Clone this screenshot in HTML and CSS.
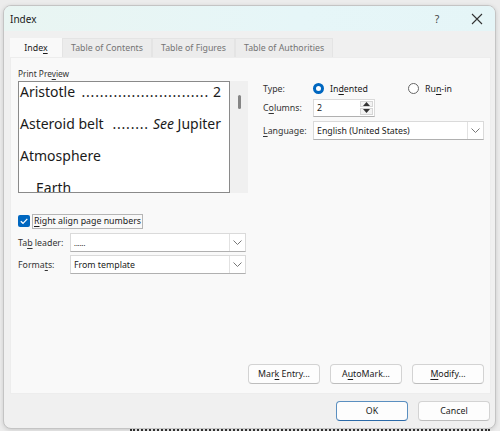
FILE: index.html
```html
<!DOCTYPE html>
<html lang="en">

<head>
    <meta charset="UTF-8" />
    <title>Index</title>
    <link rel="stylesheet" href="styles.css">
</head>

<body>
    <div class="dialog">
        <div class="titlebar">
            <span class="title">Index</span>
            <span class="help">?</span>
            <span class="close">
                <svg width="12" height="12" viewBox="0 0 12 12"><path d="M1 1 L11 11 M11 1 L1 11" stroke="#333" stroke-width="1.1" fill="none" /></svg>
            </span>
        </div>

        <div class="content">
            <div class="tabs">
                <div class="tab active">Inde<u>x</u></div>
                <div class="tab">Table of Contents</div>
                <div class="tab">Table of Figures</div>
                <div class="tab">Table of Authorities</div>
            </div>

            <div class="panel">
                <div class="top">
                    <div class="left-col">
                        <div class="small-label">Print Pre<u>v</u>iew</div>
                        <div class="preview-wrap">
                            <div class="preview">
                                <div class="entry"><span>Aristotle</span><span class="leader">............................</span><span>2</span></div>
                                <div class="entry"><span>Asteroid belt</span><span class="leader">........</span><span><i>See</i> Jupiter</span></div>
                                <div class="entry"><span>Atmosphere</span></div>
                                <div class="entry sub"><span>Earth</span></div>
                            </div>
                            <div class="scroll"><div class="thumb"></div></div>
                        </div>

                        <div class="check-row">
                            <span class="checkbox">
                                <svg width="10" height="10" viewBox="0 0 10 10"><path d="M1.8 5.2 L4 7.3 L8.3 2.8" stroke="#fff" stroke-width="1.2" fill="none" /></svg>
                            </span>
                            <span class="check-label"><u>R</u>ight align page numbers</span>
                        </div>

                        <div class="field-row">
                            <span class="field-label">Ta<u>b</u> leader:</span>
                            <div class="select wide">
                                <span class="dots">......</span>
                                <span class="arrow"><svg width="9" height="5" viewBox="0 0 9 5"><path d="M0.5 0.5 L4.5 4.5 L8.5 0.5" stroke="#777" fill="none" /></svg></span>
                            </div>
                        </div>
                        <div class="field-row">
                            <span class="field-label">Forma<u>t</u>s:</span>
                            <div class="select wide">
                                <span>From template</span>
                                <span class="arrow"><svg width="9" height="5" viewBox="0 0 9 5"><path d="M0.5 0.5 L4.5 4.5 L8.5 0.5" stroke="#777" fill="none" /></svg></span>
                            </div>
                        </div>
                    </div>

                    <div class="right-col">
                        <div class="opt-row">
                            <span class="opt-label">Type:</span>
                            <span class="radio checked"></span>
                            <span class="radio-text">In<u>d</u>ented</span>
                            <span class="radio"></span>
                            <span class="radio-text">Ru<u>n</u>-in</span>
                        </div>
                        <div class="opt-row">
                            <span class="opt-label">C<u>o</u>lumns:</span>
                            <div class="spin">
                                <span>2</span>
                                <div class="spin-btns">
                                    <span class="spin-btn"><svg width="7" height="4" viewBox="0 0 7 4"><path d="M0 4 L3.5 0 L7 4 Z" fill="#333" /></svg></span>
                                    <span class="spin-btn"><svg width="7" height="4" viewBox="0 0 7 4"><path d="M0 0 L3.5 4 L7 0 Z" fill="#333" /></svg></span>
                                </div>
                            </div>
                        </div>
                        <div class="opt-row">
                            <span class="opt-label"><u>L</u>anguage:</span>
                            <div class="select lang">
                                <span>English (United States)</span>
                                <span class="arrow"><svg width="9" height="5" viewBox="0 0 9 5"><path d="M0.5 0.5 L4.5 4.5 L8.5 0.5" stroke="#777" fill="none" /></svg></span>
                            </div>
                        </div>
                    </div>
                </div>

                <div class="panel-buttons">
                    <button class="btn">Mar<u>k</u> Entry...</button>
                    <button class="btn">A<u>u</u>toMark...</button>
                    <button class="btn"><u>M</u>odify...</button>
                </div>
            </div>

            <div class="footer">
                <button class="btn default">OK</button>
                <button class="btn">Cancel</button>
            </div>
        </div>
    </div>
    <div class="doc-line"></div>
</body>

</html>
```

FILE: styles.css
```css
* {
    margin: 0;
    padding: 0;
    box-sizing: border-box;
}

body {
    width: 500px;
    height: 431px;
    overflow: hidden;
    background: #ececec;
    font-family: 'Noto Sans', 'Open Sans', sans-serif;
    font-size: 8.8px;
    color: #1a1a1a;
    padding: 5px 4px 0 3px;
    position: relative;
}

u {
    text-decoration-thickness: 1px;
    text-underline-offset: 1.5px;
}

.dialog {
    width: 493px;
    height: 424px;
    background: #f0f0f0;
    border: 1px solid #c4c4c4;
    border-radius: 8px;
    box-shadow: 0 1px 4px rgba(0, 0, 0, 0.15);
    overflow: hidden;
    display: flex;
    flex-direction: column;
    position: relative;
    z-index: 1;
}

.titlebar {
    height: 25px;
    flex-shrink: 0;
    display: flex;
    align-items: center;
    padding-left: 6px;
    background: linear-gradient(90deg, #e9f5f2 0%, #e6f6f8 60%, #e5f5f7 100%);
}

.title {
    font-size: 10px;
    flex: 1;
    color: #1a1a1a;
}

.help {
    font-size: 10.5px;
    color: #444;
    width: 20px;
    text-align: center;
    margin-right: 20px;
}

.close {
    width: 20px;
    display: flex;
    justify-content: center;
    margin-right: 8px;
}

.content {
    flex: 1;
    display: flex;
    flex-direction: column;
    padding: 6px 5px 0 6px;
}

.tabs {
    display: flex;
    height: 19px;
    margin-top: 1px;
}

.tab {
    padding: 0 8px;
    line-height: 19px;
    color: #747474;
    background: #ececec;
    border: 1px solid #e4e4e4;
    border-bottom: none;
}

.tab.active {
    color: #1a1a1a;
    background: #f9f9f9;
    width: 52px;
    text-align: center;
    border-color: #f9f9f9;
}

.panel {
    width: 481px;
    height: 337px;
    background: #f9f9f9;
    border: 1px solid #ededed;
    padding: 9px 6px 9px 7px;
    display: flex;
    flex-direction: column;
}

.top {
    display: flex;
    gap: 15px;
}

.left-col {
    width: 230px;
}

.small-label {
    font-size: 8.3px;
    color: #333;
    height: 13px;
    line-height: 13px;
    margin-bottom: 1px;
}

.preview-wrap {
    display: flex;
    height: 112px;
}

.preview {
    width: 212px;
    height: 112px;
    background: #fff;
    border: 1px solid #8a8a8a;
    overflow: hidden;
    padding: 0 8px 0 1px;
    font-size: 14px;
    color: #1a1a1a;
}

.entry {
    display: flex;
    height: 32px;
    line-height: 20px;
    white-space: nowrap;
}

.entry.sub {
    padding-left: 16px;
}

.leader {
    flex: 1;
    overflow: hidden;
    margin: 0 4px;
    letter-spacing: 0.8px;
    text-align: right;
}

.scroll {
    width: 18px;
    background: #f0f0f0;
    display: flex;
    justify-content: center;
    padding-top: 14px;
}

.thumb {
    width: 3px;
    height: 14px;
    background: #858585;
    border-radius: 2px;
}

.check-row {
    display: flex;
    align-items: center;
    margin-top: 20px;
    height: 16px;
}

.checkbox {
    width: 12px;
    height: 12px;
    background: #0067c0;
    border-radius: 2px;
    display: flex;
    align-items: center;
    justify-content: center;
    margin-right: 2px;
}

.check-label {
    border: 1px solid #b5b5b5;
    padding: 0 1px;
    line-height: 13px;
}

.field-row {
    display: flex;
    align-items: center;
    margin-top: 4px;
}

.field-row + .field-row {
    margin-top: 3px;
}

.field-label {
    width: 52px;
    color: #333;
    white-space: nowrap;
}

.select {
    height: 19px;
    background: #fff;
    border: 1px solid #dadada;
    border-bottom-color: #b0b0b0;
    display: flex;
    align-items: center;
    padding-left: 3px;
}

.select span:first-child {
    flex: 1;
}

.select.wide {
    width: 176px;
}

.dots {
    font-size: 7px;
    letter-spacing: 0;
    padding-top: 2px;
}

.arrow {
    width: 16px;
    height: 100%;
    border-left: 1px solid #e2e2e2;
    display: flex;
    align-items: center;
    justify-content: center;
}

.right-col {
    flex: 1;
    padding-top: 12px;
}

.opt-row {
    display: flex;
    align-items: center;
    height: 19px;
    margin-bottom: 4px;
}

.opt-row:first-child {
    margin-bottom: 0;
}

.opt-label {
    width: 50px;
    color: #333;
    white-space: nowrap;
}

.radio {
    width: 11px;
    height: 11px;
    border-radius: 50%;
    border: 1px solid #666;
    background: #fff;
    margin-right: 6px;
}

.radio.checked {
    border: 3.5px solid #0067c0;
}

.radio-text {
    width: 78px;
}

.spin {
    width: 62px;
    height: 18px;
    background: #fff;
    border: 1px solid #dadada;
    border-bottom-color: #b0b0b0;
    display: flex;
    align-items: center;
    padding-left: 3px;
}

.spin span:first-child {
    flex: 1;
}

.spin-btns {
    display: flex;
    flex-direction: column;
    gap: 1px;
    margin-right: 1px;
}

.spin-btn {
    width: 13px;
    height: 7px;
    background: #f3f3f3;
    border: 1px solid #d6d6d6;
    display: flex;
    align-items: center;
    justify-content: center;
}

.select.lang {
    width: 171px;
    height: 19px;
}

.panel-buttons {
    margin-top: auto;
    display: flex;
    justify-content: flex-end;
    gap: 10px;
}

.btn {
    width: 72px;
    height: 20px;
    background: #fdfdfd;
    border: 1px solid #d3d3d3;
    border-bottom-color: #bdbdbd;
    border-radius: 4px;
    font-family: 'Noto Sans', 'Open Sans', sans-serif;
    font-size: 8.8px;
    color: #1a1a1a;
}

.footer {
    display: flex;
    justify-content: flex-end;
    gap: 10px;
    margin-top: 7px;
}

.btn.default {
    border: 1px solid #5a8fc0;
    border-bottom-color: #2c6aa8;
}

.doc-line {
    position: absolute;
    left: 130px;
    right: 10px;
    bottom: 0;
    height: 2px;
    border-top: 2px dotted #333;
}
```
